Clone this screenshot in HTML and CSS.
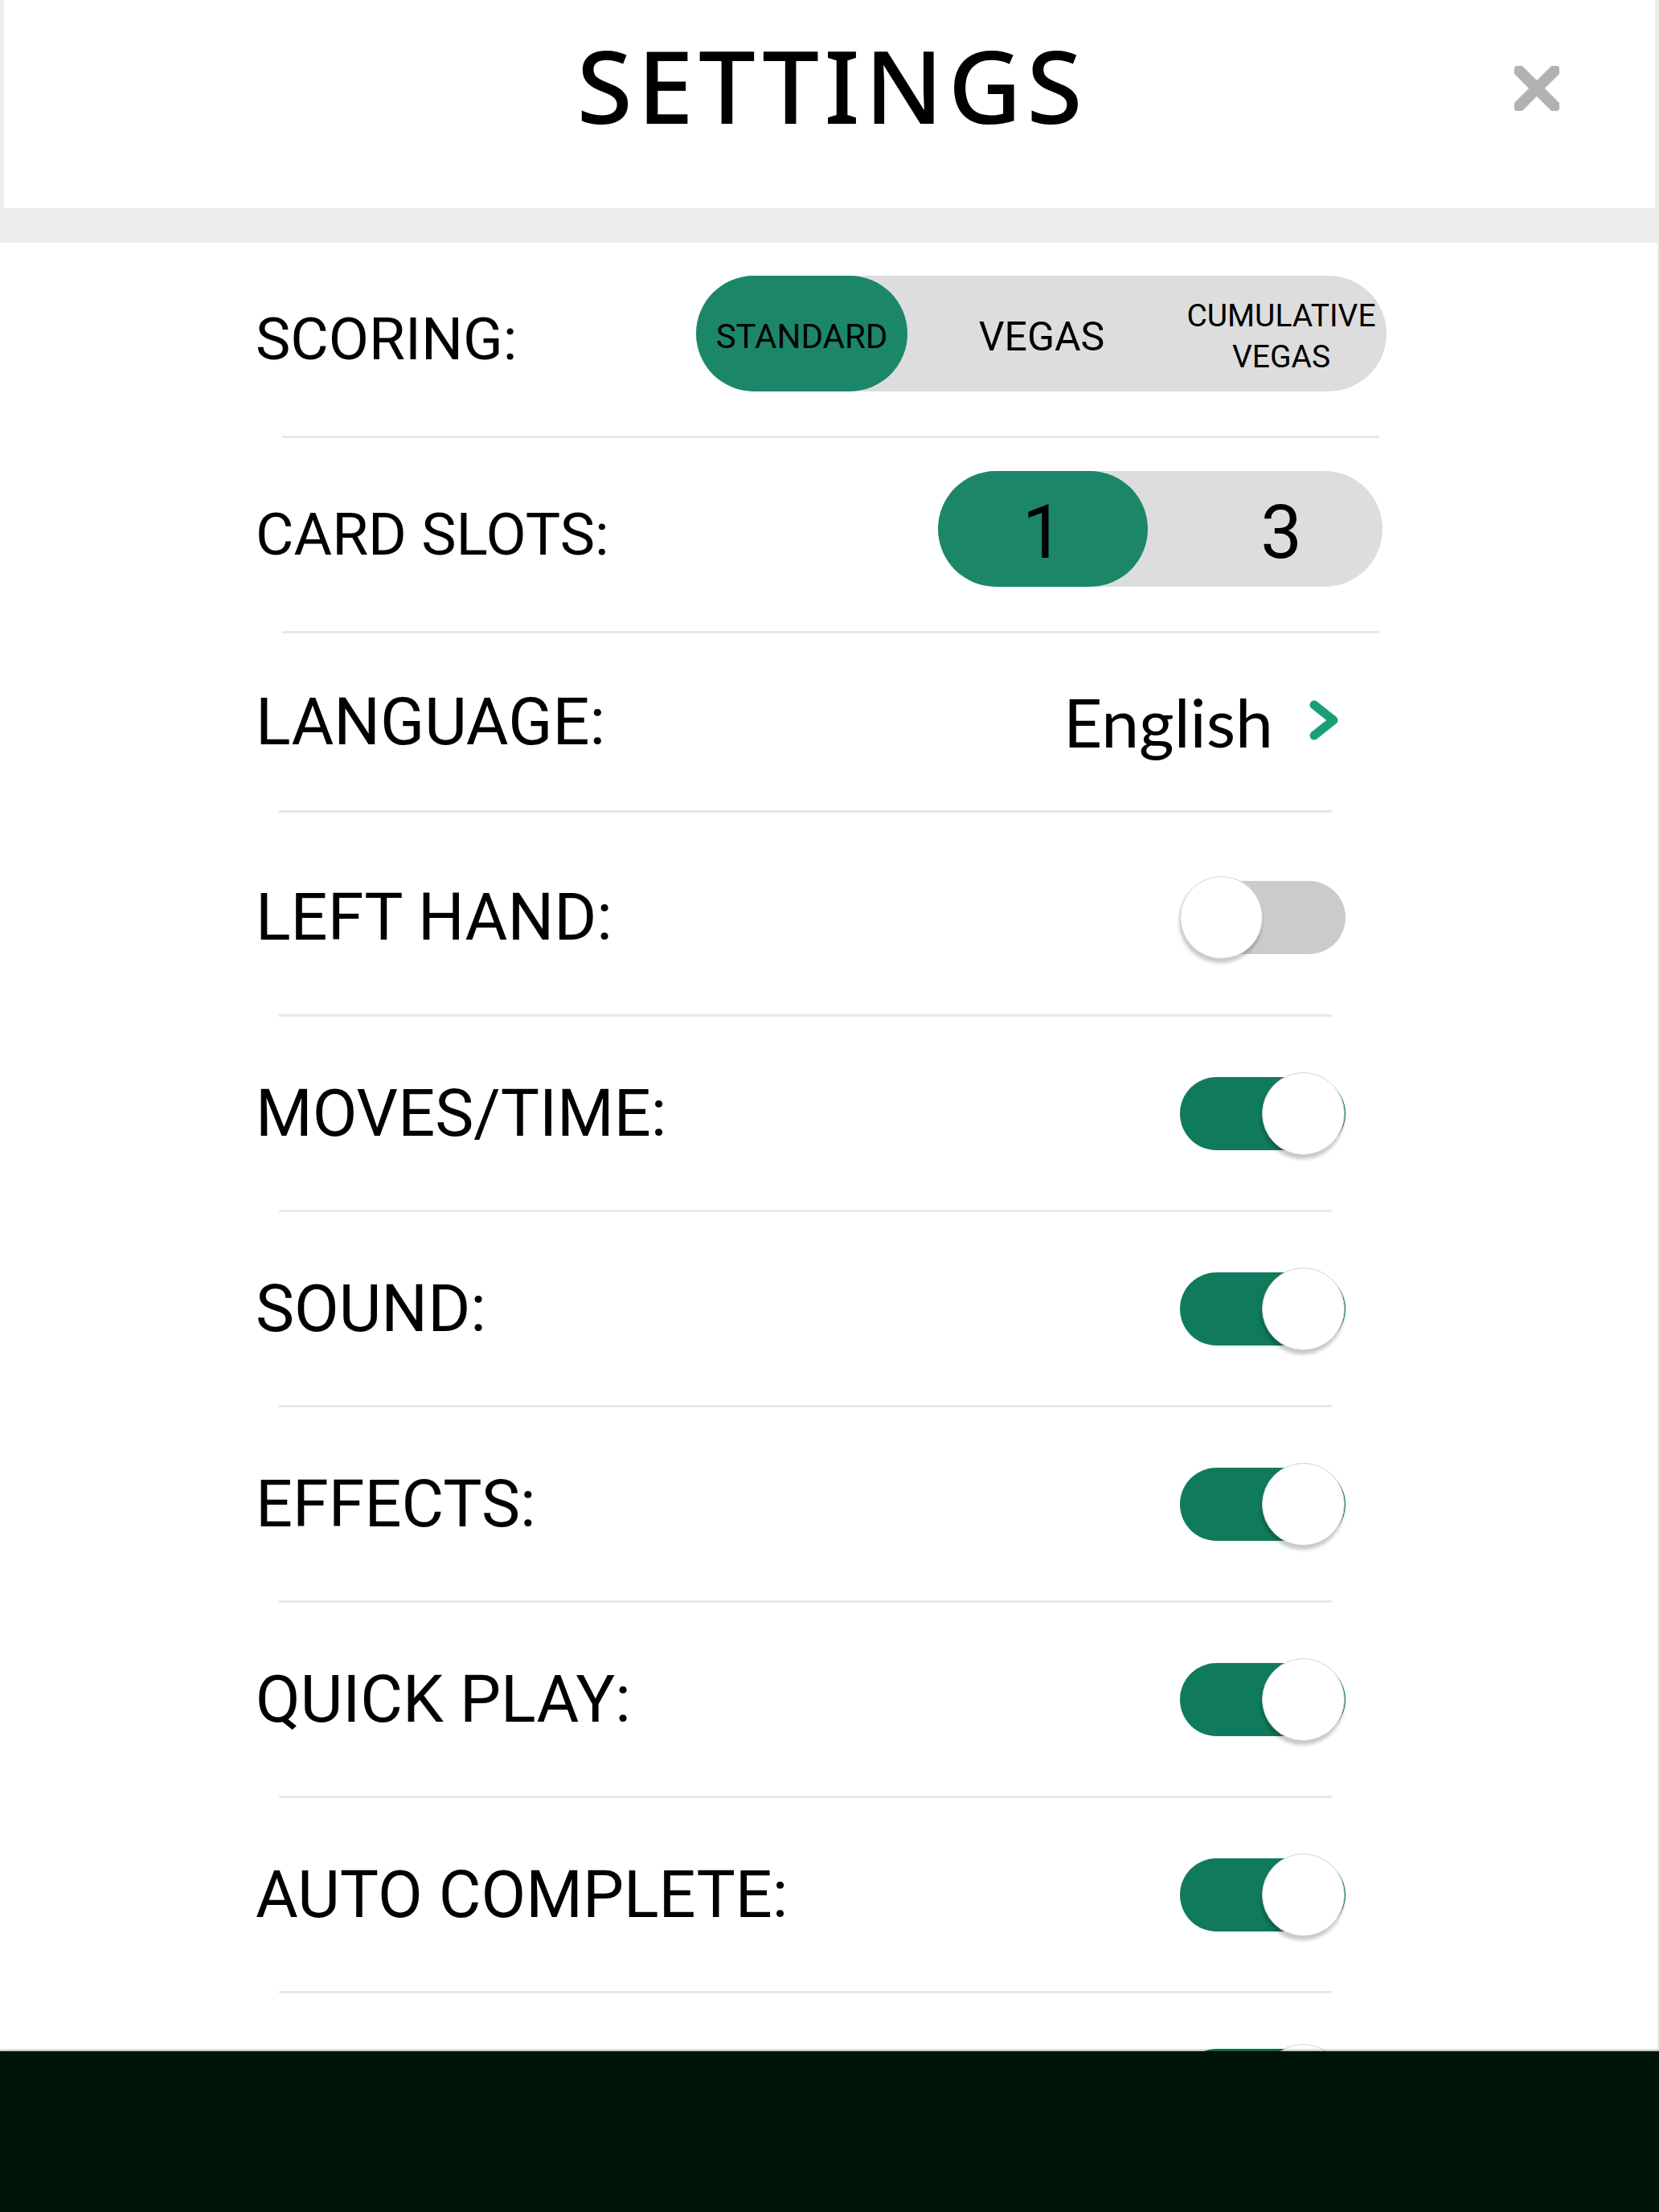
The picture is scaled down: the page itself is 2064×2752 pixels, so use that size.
FILE: index.html
```html
<!DOCTYPE html>
<html lang="en">
<head>
<meta charset="utf-8">
<title>Settings</title>
<link rel="stylesheet" href="styles.css">
</head>
<body>
<div class="screen">
  <header class="topbar">
    <div class="spacer"></div>
    <h1 class="title">SETTINGS</h1>
    <button class="close" aria-label="Close">
      <svg viewBox="0 0 56 56" width="56" height="56"><path d="M6 6 L50 50 M50 6 L6 50" stroke="#b2b2b2" stroke-width="14" stroke-linecap="square" fill="none"/></svg>
    </button>
  </header>

  <main class="panel">
    <div class="row row-seg">
      <span class="label label-sm">SCORING:</span>
      <div class="seg seg-scoring">
        <span class="seg-item active std">STANDARD</span>
        <span class="seg-item vegas">VEGAS</span>
        <span class="seg-item cumul">CUMULATIVE<br>VEGAS</span>
      </div>
    </div>
    <div class="rule rule-wide"></div>

    <div class="row row-seg">
      <span class="label label-sm">CARD SLOTS:</span>
      <div class="seg seg-slots">
        <span class="seg-item active digit">1</span>
        <span class="seg-item digit digit-3">3</span>
      </div>
    </div>
    <div class="rule rule-wide"></div>

    <div class="row row-short">
      <span class="label">LANGUAGE:</span>
      <div class="lang">
        <span class="lang-name">English</span>
        <svg class="chev" viewBox="0 0 38 52" width="38" height="52"><polyline points="7,7 31,26 7,45" fill="none" stroke="#1a9e78" stroke-width="11" stroke-linecap="round" stroke-linejoin="round"/></svg>
      </div>
    </div>
    <div class="rule"></div>

    <div class="row row-tall">
      <span class="label">LEFT HAND:</span>
      <div class="toggle"><span class="knob"></span></div>
    </div>
    <div class="rule"></div>

    <div class="row">
      <span class="label">MOVES/TIME:</span>
      <div class="toggle on"><span class="knob"></span></div>
    </div>
    <div class="rule"></div>

    <div class="row">
      <span class="label">SOUND:</span>
      <div class="toggle on"><span class="knob"></span></div>
    </div>
    <div class="rule"></div>

    <div class="row">
      <span class="label">EFFECTS:</span>
      <div class="toggle on"><span class="knob"></span></div>
    </div>
    <div class="rule"></div>

    <div class="row">
      <span class="label">QUICK PLAY:</span>
      <div class="toggle on"><span class="knob"></span></div>
    </div>
    <div class="rule"></div>

    <div class="row">
      <span class="label">AUTO COMPLETE:</span>
      <div class="toggle on"><span class="knob"></span></div>
    </div>
    <div class="rule"></div>

    <div class="row row-last">
      <span class="label"></span>
      <div class="toggle on"><span class="knob"></span></div>
    </div>
  </main>

  <div class="adbar"></div>
</div>
</body>
</html>
```
FILE: styles.css
```css
html, body {
  margin: 0;
  padding: 0;
}
body {
  background: #ececec;
  width: 2064px;
  height: 2752px;
  overflow: hidden;
  font-family: Roboto, "Liberation Sans", sans-serif;
  color: #000;
}
.screen {
  display: flex;
  flex-direction: column;
  height: 2752px;
}
.topbar {
  height: 259px;
  margin: 0 5px;
  background: #fff;
  display: grid;
  grid-template-columns: 1fr auto 1fr;
  align-items: center;
  padding-bottom: 50px;
  box-sizing: border-box;
  flex: none;
}
.title {
  margin: 0;
  font-family: "Noto Sans", sans-serif;
  font-weight: 500;
  font-size: 126px;
  line-height: 126px;
  letter-spacing: 6px;
  padding-left: 6px;
  color: #000;
}
.close {
  justify-self: end;
  margin-right: 119px;
  margin-top: 10px;
  border: 0;
  background: none;
  padding: 0;
  width: 56px;
  height: 56px;
  display: block;
}
.close svg {
  display: block;
}
.panel {
  margin-top: 43px;
  margin-right: 2px;
  background: #fff;
  flex: 1;
  overflow: hidden;
}
.row {
  display: flex;
  align-items: center;
  height: 240px;
  padding-left: 318px;
  padding-right: 337px;
  box-sizing: border-box;
}
.row-short {
  height: 220px;
}
.row-tall {
  height: 251px;
  padding-top: 9px;
}
.row-last {
  padding-bottom: 12px;
}
.label {
  font-size: 81px;
  line-height: 1;
  white-space: nowrap;
}
.label-sm {
  font-size: 73px;
}
.rule {
  height: 3px;
  background: #e8e8e8;
  margin-left: 347px;
  width: 1310px;
}
.rule-wide {
  margin-left: 351px;
  width: 1365px;
}

/* segmented controls */
.seg {
  margin-left: auto;
  height: 144px;
  background: #dddddd;
  border-radius: 72px;
  display: grid;
  align-items: stretch;
  margin-bottom: 14px;
}
.seg-scoring {
  width: 859px;
  grid-template-columns: 263px 1fr 262px;
}
.seg-slots {
  width: 553px;
  margin-right: 5px;
  grid-template-columns: 261px 1fr;
}
.seg-item {
  display: flex;
  align-items: center;
  justify-content: center;
  text-align: center;
  border-radius: 72px;
  color: #000;
  padding-top: 7px;
}
.seg-item.active {
  background: #1b8768;
}
.std {
  font-size: 42px;
}
.vegas {
  font-size: 50px;
}
.cumul {
  font-size: 39px;
  line-height: 51px;
  padding-top: 8px;
}
.digit {
  font-size: 92px;
  line-height: 1;
  padding-top: 10px;
}
.digit-3 {
  padding-left: 40px;
}

/* language */
.lang {
  margin-left: auto;
  margin-right: 59px;
  display: flex;
  align-items: center;
  gap: 44px;
}
.lang-name {
  font-family: Lato, "Noto Sans", sans-serif;
  font-size: 84px;
  line-height: 1;
  color: #000;
}
.chev {
  display: block;
  margin-top: -4px;
}

/* toggles */
.toggle {
  margin-left: auto;
  margin-right: 51px;
  width: 206px;
  height: 91px;
  border-radius: 46px;
  background: #cbcbcb;
  position: relative;
  flex: none;
}
.toggle.on {
  background: #0f7b5c;
}
.knob {
  position: absolute;
  top: -6px;
  left: 0;
  width: 101px;
  height: 101px;
  border-radius: 50%;
  background: #fff;
  border: 1px solid #d2d2d2;
  box-shadow: -1px 5px 4px rgba(0, 0, 0, 0.22);
}
.toggle.on .knob {
  left: auto;
  right: 1px;
}

.adbar {
  height: 200px;
  flex: none;
  background: #01140a;
  box-shadow: 0 -2px 2px rgba(0, 0, 0, 0.25);
  position: relative;
}
```
